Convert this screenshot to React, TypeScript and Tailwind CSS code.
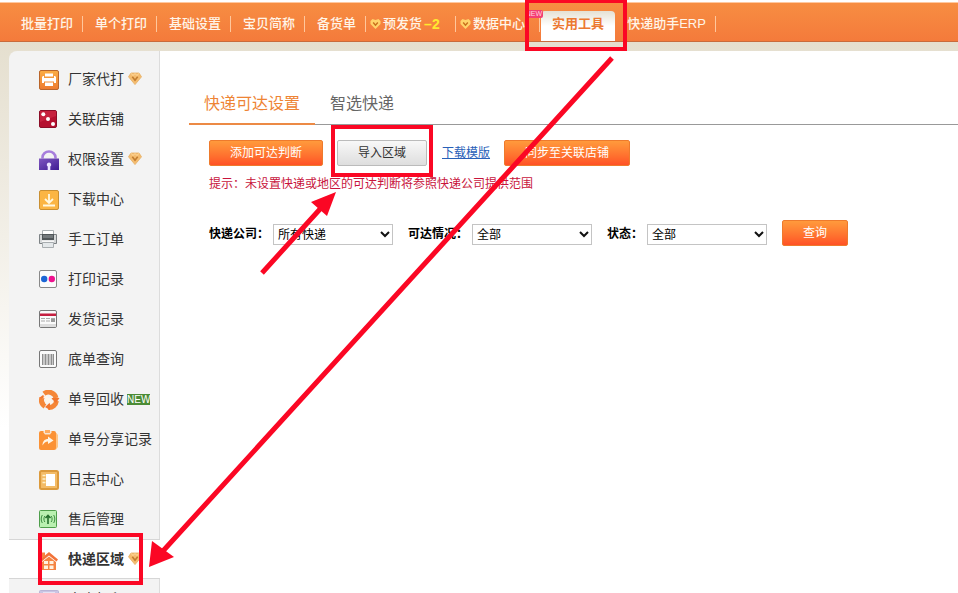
import type { ReactNode } from "react";

const orangeButton =
  "h-[26px] rounded-xs border border-[#ee7a2c] bg-linear-to-b from-[#ff9a3c] to-[#ff5126] text-xs text-white";

function Gem() {
  return (
    <svg width="14" height="14" viewBox="0 0 14 14" className="shrink-0" aria-hidden="true">
      <path d="M3 1h8l2.500 3.800L7 12.600.5 4.800Z" fill="#f5bd70" stroke="#e5ad62" strokeWidth=".8" strokeLinejoin="round" />
      <path d="M3 1.200 5 3.500 7 1.500l2 2 2-2.300" fill="none" stroke="#ffe0aa" strokeWidth=".8" />
      <path d="m4.300 4.800 2.700 3.400 2.700-3.400" fill="none" stroke="#c17c30" strokeWidth="1.600" />
    </svg>
  );
}

function HeartGem() {
  return (
    <svg width="11" height="12" viewBox="0 0 11 12" className="shrink-0" aria-hidden="true">
      <path d="M5.500 11 .5 6V3L2.500 1l3 1 3-1 2 2v3Z" fill="#ffd36a" />
      <path d="m3.200 4.500 2.300 2.700 2.300-2.700" fill="none" stroke="#c9701c" strokeWidth="1.400" />
    </svg>
  );
}

function Svg({ children }: { children: ReactNode }) {
  return (
    <svg width="21" height="21" viewBox="0 0 21 21" className="shrink-0" aria-hidden="true">
      {children}
    </svg>
  );
}

const icons: Record<string, ReactNode> = {
  factory: (
    <Svg>
      <defs>
        <linearGradient id="factory" x2="0" y2="1">
          <stop stopColor="#fbae45" />
          <stop offset="1" stopColor="#ee7a2d" />
        </linearGradient>
      </defs>
      <rect x=".5" y=".5" width="19" height="19" rx="1.500" fill="url(#factory)" stroke="#b9652a" />
      <path d="M6 3.500h8v3H6zM4 6h1v2h10V6h1l1 1v6h-2v-1.500H5V13H3V7zM6 12.500h8v3.500H6z" fill="#fff" />
    </Svg>
  ),
  dice: (
    <Svg>
      <rect x=".5" y=".5" width="17" height="17" rx="1.500" fill="#b5102f" stroke="#8b0d27" />
      <path d="M1 1h16v5L1 12Z" fill="#c6213e" />
      <circle cx="4.300" cy="4.300" r="2" fill="#fff" />
      <circle cx="9" cy="9" r="2" fill="#fff" />
      <circle cx="14" cy="14" r="2" fill="#fff" />
    </Svg>
  ),
  lock: (
    <Svg>
      <defs>
        <linearGradient id="lock" x2="1" y2="1">
          <stop stopColor="#8057c0" />
          <stop offset="1" stopColor="#3f1c93" />
        </linearGradient>
      </defs>
      <path d="M3.500 8.500V7.500a6.500 6 0 0 1 13 0v1" fill="none" stroke="#a77edc" strokeWidth="2.600" />
      <path d="M0 8.500h20V20H0z" fill="url(#lock)" />
      <path d="M10 12.500a2.200 2.200 0 0 1 1.300 4V20H8.700v-3.500a2.200 2.200 0 0 1 1.300-4" fill="#eee6ff" />
    </Svg>
  ),
  download: (
    <Svg>
      <rect x=".5" y=".5" width="19" height="19" rx="1.500" fill="#fbb543" stroke="#c98f32" />
      <path d="M10 4v9M6 9l4 4 4-4M4 15.500h12" fill="none" stroke="#fff8e0" strokeWidth="1.800" />
    </Svg>
  ),
  printer: (
    <Svg>
      <path d="M3.500.5h11V5h-11z" fill="#fff" stroke="#aab0b3" />
      <path d="M.5 4.500h17v9H.5z" fill="#d5d8d9" stroke="#7d8285" />
      <path d="M3 4h12v6H3z" fill="#505659" />
      <path d="M4 5h10v3H4z" fill="#747a7d" />
      <path d="M3 10.500h12V12H3z" fill="#f7f7f7" />
      <path d="M3.500 12.500h11v5h-11z" fill="#e4e8ea" stroke="#a8adb0" />
    </Svg>
  ),
  dots: (
    <Svg>
      <rect x=".5" y=".5" width="17" height="17" rx="1.500" fill="#fcfcfc" stroke="#888" />
      <circle cx="5.200" cy="9" r="3.200" fill="#1c66d5" />
      <circle cx="12.800" cy="9" r="3.200" fill="#ee128e" />
    </Svg>
  ),
  news: (
    <Svg>
      <rect x=".5" y=".5" width="17" height="17" rx="1.500" fill="#fafafa" stroke="#777" />
      <path d="M1 3.500h16V6H1z" fill="#c51f40" />
      <path d="M2 8.500h4M7 8.500h4M2 11h4M7 11h4M12 8.500h4" stroke="#aaa" />
      <path d="M12 9h4v3h-4z" fill="#999" />
      <path d="M1 14h16v3H1z" fill="#ddd" />
    </Svg>
  ),
  barcode: (
    <Svg>
      <rect x=".5" y=".5" width="17" height="17" rx="1.500" fill="#fafafa" stroke="#777" />
      <path d="M3 4h12v11H3z" fill="#c8c8c8" />
      <path d="M3.500 4v11M6.500 4v11M9.500 4v11M12.500 4v11M14.500 4v11" stroke="#8f8f8f" />
    </Svg>
  ),
  recycle: (
    <Svg>
      <g fill="none" stroke="#f58637" strokeWidth="5">
        <path d="M5 3.800A7.500 7.500 0 0 1 17 8" />
        <path d="M17.400 11a7.500 7.500 0 0 1-8 6.500" />
        <path d="M6 16.400A7.500 7.500 0 0 1 2.800 8" />
      </g>
      <path d="M12 8h8.500l-3.500 5ZM11 12.500V20l-5-3ZM0 8l4-3 4 4Z" fill="#f2762e" />
      <path d="m4 7 4-2 1 3 4-1-1 4 3 1-4 2-1-2-4 2 1-4Z" fill="#fff4e8" />
    </Svg>
  ),
  share: (
    <Svg>
      <path d="M14 3h3.500l1.500 2v12l-2 2.500h-3Z" fill="#ffc585" />
      <rect y="1" width="17" height="19" rx="2" fill="#fb9235" />
      <path d="M4.500 1h8v1.500L11 4.500H6L4.500 2.500Z" fill="#f8e6d2" />
      <path d="M6 0h5v3H6z" fill="#ffad61" />
      <path d="M3.500 15.500c0-4.500 2.500-6.500 5.500-6.500V6.500l5.500 4L9 14v-2.500c-2.500 0-4 1.500-5.500 4" fill="#fff5e5" />
    </Svg>
  ),
  log: (
    <Svg>
      <rect x="1" y="1" width="18" height="18" rx="1.500" fill="#f3bb66" stroke="#dc9a3c" strokeWidth="2" />
      <path d="M7 4h9v12H7z" fill="#fff" />
      <path d="M3.500 5.500h3M3.500 9h3M3.500 12.500h3" stroke="#fff1c9" strokeWidth="1.600" />
    </Svg>
  ),
  service: (
    <Svg>
      <rect x=".5" y=".5" width="17" height="17" rx="1" fill="#b9f0b0" stroke="#4e9e4b" />
      <path d="M9 14V6M6.500 8 9 5.500 11.500 8" fill="none" stroke="#256f2c" strokeWidth="1.600" />
      <path d="M3.300 5c-1.500 2.500-1.500 5.500 0 8M14.700 5c1.500 2.500 1.500 5.500 0 8M5.800 6c-1.200 2-1.200 4 0 6M12.200 6c1.200 2 1.200 4 0 6" fill="none" stroke="#3d8d42" />
    </Svg>
  ),
  house: (
    <Svg>
      <path d="M0 10.500 10 2l9 7.500-1.500 2L10 5.500 2 12Z" fill="#f2733a" />
      <path d="M3 2.500h3V6L3 8.500zM3 12l7-5.500 7 5.500v8H3Z" fill="#f58443" />
      <path d="M5 11h4v3H5zM10.500 11h4v3h-4zM5 15.500h4V19H5zM10.500 15.500h4V19h-4z" fill="#fff1df" />
    </Svg>
  ),
  card: (
    <Svg>
      <rect x=".5" y=".5" width="19" height="19" rx="1" fill="#c9c5e4" stroke="#b9b5d6" />
      <path d="M4 2h12v8H4z" fill="#e4e2f3" />
    </Svg>
  ),
};

type Entry = { icon: string; label: string; gem?: boolean; fresh?: boolean; active?: boolean };

const entries: Entry[] = [
  { icon: "factory", label: "厂家代打", gem: true },
  { icon: "dice", label: "关联店铺" },
  { icon: "lock", label: "权限设置", gem: true },
  { icon: "download", label: "下载中心" },
  { icon: "printer", label: "手工订单" },
  { icon: "dots", label: "打印记录" },
  { icon: "news", label: "发货记录" },
  { icon: "barcode", label: "底单查询" },
  { icon: "recycle", label: "单号回收", fresh: true },
  { icon: "share", label: "单号分享记录" },
  { icon: "log", label: "日志中心" },
  { icon: "service", label: "售后管理" },
  { icon: "house", label: "快递区域", gem: true, active: true },
  { icon: "card", label: "客户打印" },
];

function NavItem({ children, tight = false }: { children: ReactNode; tight?: boolean }) {
  return (
    <li className="flex shrink-0 items-center pt-1">
      <a href="#" className={tight ? "flex items-center gap-0.5 pl-1 whitespace-nowrap" : "pr-[9px] pl-3 whitespace-nowrap"}>
        {children}
      </a>
      <span className="h-4 w-px bg-[#ffc79c]" />
    </li>
  );
}

function Header() {
  return (
    <header className="mt-0.5 h-10 border-t border-b border-t-[#ffc8a0] border-b-[#c96b3c] bg-linear-to-b from-[#f78d42] to-[#f47a3b] text-[13px] font-medium text-[#fff5e8]">
      <ul className="flex h-full items-center pl-[9px]">
        <NavItem>批量打印</NavItem>
        <NavItem>单个打印</NavItem>
        <NavItem>基础设置</NavItem>
        <NavItem>宝贝简称</NavItem>
        <NavItem>备货单</NavItem>
        <NavItem tight>
          <HeartGem />
          预发货
          <b className="w-[31px] text-sm leading-5 text-[#ffe92f]">–2</b>
        </NavItem>
        <NavItem tight>
          <HeartGem />
          <span className="relative pr-[14px]">
            数据中心
            <span className="absolute -top-1 -right-1 rounded-xs bg-[#f43e73] px-px text-[7px] leading-2 text-[#ffd4df]">NEW</span>
          </span>
        </NavItem>
        <li className="ml-px shrink-0 self-end">
          <a href="#" className="flex h-[30px] items-center rounded-t-sm bg-linear-to-b from-[#e5e1d4] via-white via-50% to-white px-[11px] pb-1 font-bold whitespace-nowrap text-[#ec7931]">
            实用工具
          </a>
        </li>
        <NavItem>快递助手ERP</NavItem>
      </ul>
    </header>
  );
}

function Sidebar() {
  return (
    <nav className="w-[151px] shrink-0 rounded-tl-lg border-r border-[#dcdcdc] bg-[#f3f3f3] pt-2 text-sm text-[#333]">
      <ul>
        {entries.map((e) => (
          <li key={e.label}>
            <a
              href="#"
              className={
                e.active
                  ? "-mr-px flex h-10 items-center gap-2 border-y border-[#d6d6d6] bg-white pl-[30px] font-bold whitespace-nowrap"
                  : "flex h-10 items-center gap-2 pl-[30px] whitespace-nowrap"
              }
            >
              <span className="pt-0.5">{icons[e.icon]}</span>
              <span className="flex items-center gap-1">
                {e.label}
                {e.gem && <Gem />}
                {e.fresh && <span className="-ml-px bg-[#4b8b35] text-[10px] leading-[11px] font-medium text-white">NEW</span>}
              </span>
            </a>
          </li>
        ))}
      </ul>
    </nav>
  );
}

function Filter({ id, label, option, short = false }: { id: string; label: string; option: string; short?: boolean }) {
  return (
    <div className="flex items-center pt-0.5">
      <label htmlFor={id} className={short ? "w-10 font-bold whitespace-nowrap" : "w-16 font-bold whitespace-nowrap"}>
        {label}
      </label>
      <span className="relative">
        <select id={id} className="block h-[21px] w-[120px] appearance-none border border-[#c4c4c4] bg-white px-1 pt-px text-xs text-black">
          <option>{option}</option>
        </select>
        <svg width="10" height="7" viewBox="0 0 10 7" className="pointer-events-none absolute top-[7px] right-[3px]" aria-hidden="true">
          <path d="m1 1 4 4 4-4" fill="none" stroke="#111" strokeWidth="2" />
        </svg>
      </span>
    </div>
  );
}

function Content() {
  return (
    <main className="min-w-0 flex-1 bg-white pl-[29px] text-xs">
      <div role="tablist" className="flex h-[74px] items-end border-b border-[#999] pt-8 text-base text-[#666]">
        <button role="tab" aria-selected="true" className="-mb-px h-[42px] border-b-2 border-[#ec8a45] px-[15px] pt-0.5 text-[#ee8434]">
          快递可达设置
        </button>
        <button role="tab" aria-selected="false" className="h-[41px] px-[15px]">
          智选快递
        </button>
      </div>
      <div className="pl-5">
        <div className="mt-[15px] flex items-center">
          <button className={`${orangeButton} w-[114px]`}>添加可达判断</button>
          <button className="ml-[14px] h-[26px] w-[90px] rounded-xs border border-[#bbb] bg-linear-to-b from-[#f8f8f8] to-[#dedede] text-[#333]">
            导入区域
          </button>
          <a href="#" className="ml-[15px] text-[#2860b8] underline">
            下载模版
          </a>
          <button className={`${orangeButton} ml-[14px] w-[126px]`}>同步至关联店铺</button>
        </div>
        <p className="mt-2 leading-5 text-[#c8143c]">提示：未设置快递或地区的可达判断将参照快递公司提供范围</p>
        <form className="mt-[26px] flex items-center gap-[15px]">
          <Filter id="company" label="快递公司：" option="所有快递" />
          <Filter id="reach" label="可达情况：" option="全部" />
          <Filter id="state" label="状态：" option="全部" short />
          <button type="button" className={`${orangeButton} w-[66px]`}>查询</button>
        </form>
      </div>
    </main>
  );
}

function Annotations() {
  return (
    <svg width="958" height="593" viewBox="0 0 958 593" className="pointer-events-none absolute top-0 left-0" aria-hidden="true">
      <g fill="none" stroke="#fb0724" strokeWidth="4">
        <rect x="527" y="1" width="98" height="48" />
        <rect x="333" y="127" width="98" height="48" />
        <rect x="40" y="535" width="101" height="48" />
        <path d="M612 58 163 551M262 273l59-65" strokeWidth="5" />
      </g>
      <path d="m149 567 3-26 22 16ZM336 192l-25 10 16 14Z" fill="#fb0724" />
    </svg>
  );
}

export default function App() {
  return (
    <div className="relative flex h-screen flex-col overflow-hidden bg-white font-['Liberation_Sans','Noto_Sans_CJK_SC',sans-serif]">
      <Header />
      <div className="flex min-h-0 flex-1 bg-linear-to-b from-[#e5dfcf] to-white to-70% pt-[9px] pl-[9px]">
        <Sidebar />
        <Content />
      </div>
      <Annotations />
    </div>
  );
}
